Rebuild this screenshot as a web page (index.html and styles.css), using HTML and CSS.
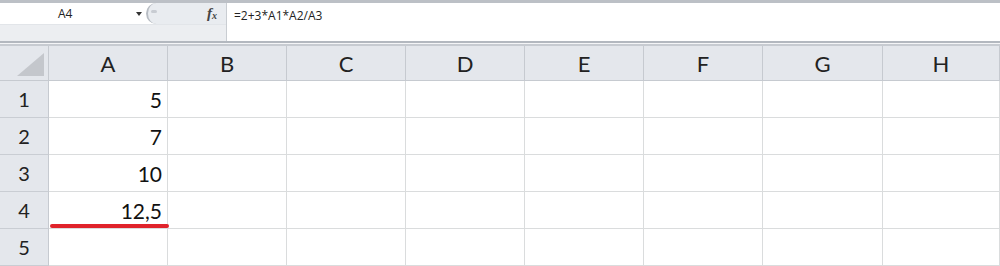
FILE: index.html
```html
<!DOCTYPE html>
<html lang="pt-br">
<head>
    <meta charset="UTF-8">
    <title>Planilha</title>
    <link rel="stylesheet" href="styles.css">
</head>
<body>
    <div class="formula-bar">
        <div class="left-part">
            <div class="top-row">
                <div class="name-box">
                    <span class="cell-ref">A4</span>
                    <span class="arrow"></span>
                </div>
                <div class="fx-area">
                    <span class="knob"></span>
                    <span class="fx"><i>f</i><sub>x</sub></span>
                </div>
            </div>
            <div class="bottom-row"></div>
        </div>
        <div class="formula">=2+3*A1*A2/A3</div>
    </div>
    <div class="separator"></div>

    <div class="sheet">
        <div class="grid">
            <div class="corner"><span class="tri"></span></div>
            <div class="col-head">A</div>
            <div class="col-head">B</div>
            <div class="col-head">C</div>
            <div class="col-head">D</div>
            <div class="col-head">E</div>
            <div class="col-head">F</div>
            <div class="col-head">G</div>
            <div class="col-head">H</div>
        </div>
        <div id="rows"></div>
        <div class="mark"></div>
    </div>

    <script>
        const valores = ['5', '7', '10', '12,5', ''];
        const rows = document.querySelector('#rows');
        valores.forEach((v, i) => {
            const linha = document.createElement('div');
            linha.className = 'grid';
            let html = `<div class="row-head">${i + 1}</div><div class="cell num">${v}</div>`;
            for (let c = 0; c < 7; c++) {
                html += '<div class="cell"></div>';
            }
            linha.innerHTML = html;
            rows.appendChild(linha);
        });
    </script>
</body>
</html>
```

FILE: styles.css
```css
body {
    margin: 0;
    padding: 0;
    width: 1000px;
    height: 266px;
    overflow: hidden;
    background: #fff;
    font-family: Lato, "Open Sans", sans-serif;
}
.formula-bar {
    display: flex;
    height: 38px;
    border-top: 3px solid #bcc0c6;
    background: #fff;
}
.left-part {
    width: 226px;
    display: flex;
    flex-direction: column;
    border-right: 1px solid #c9cdd2;
}
.top-row {
    display: flex;
    height: 21px;
}
.name-box {
    width: 146px;
    background: #fff;
    position: relative;
    font-family: "Open Sans", sans-serif;
    font-size: 12px;
    color: #222;
}
.cell-ref {
    position: absolute;
    left: 58px;
    top: 2px;
}
.arrow {
    position: absolute;
    left: 136px;
    top: 9px;
    border-left: 3px solid transparent;
    border-right: 3px solid transparent;
    border-top: 4px solid #333;
}
.fx-area {
    flex: 1;
    display: flex;
    align-items: center;
    justify-content: flex-end;
    padding-right: 9px;
    background: #e9ecf0;
    border-radius: 11px 0 0 11px;
    border-left: 2px solid #b7bcc3;
    position: relative;
}
.knob {
    position: absolute;
    left: 3px;
    top: 7px;
    width: 6px;
    height: 3px;
    border-radius: 2px;
    background: #c8ccd2;
}
.fx {
    font-family: "Liberation Serif", serif;
    font-size: 15px;
    font-weight: bold;
    color: #444;
}
.fx sub {
    font-size: 10px;
    font-style: italic;
    vertical-align: -1px;
}
.bottom-row {
    flex: 1;
    background: #eceef1;
    border-top: 1px solid #e2e5e9;
}
.formula {
    flex: 1;
    padding: 4px 0 0 7px;
    font-family: "Open Sans", sans-serif;
    font-size: 12px;
    color: #222;
}
.separator {
    height: 1px;
    border-top: 2px solid #b3b8bf;
    border-bottom: 2px solid #c7cbd1;
    background: #f4f5f7;
}
.sheet {
    position: relative;
}
.grid {
    display: grid;
    grid-template-columns: 49px repeat(6, 119px) 120px 117px;
}
.corner,
.col-head {
    height: 35px;
    box-sizing: border-box;
    background: #e4e7ec;
    border-right: 1px solid #c6cad0;
    border-bottom: 1px solid #c6cad0;
}
.corner {
    position: relative;
}
.tri {
    position: absolute;
    right: 4px;
    bottom: 4px;
    width: 0;
    height: 0;
    border-left: 27px solid transparent;
    border-bottom: 23px solid #c4c7cc;
}
.col-head {
    display: flex;
    align-items: center;
    justify-content: center;
    font-size: 22px;
    color: #222;
}
.row-head {
    height: 37px;
    box-sizing: border-box;
    background: #e4e7ec;
    border-right: 1px solid #c6cad0;
    border-bottom: 1px solid #c9cdd3;
    display: flex;
    align-items: center;
    justify-content: center;
    font-size: 20px;
    color: #222;
}
.cell {
    height: 37px;
    box-sizing: border-box;
    border-right: 1px solid #dadcdd;
    border-bottom: 1px solid #dadcdd;
}
.num {
    display: flex;
    align-items: center;
    justify-content: flex-end;
    padding-right: 5px;
    font-size: 21px;
    color: #111;
}
.mark {
    position: absolute;
    left: 50px;
    top: 178px;
    width: 119px;
    height: 4px;
    border-radius: 2px;
    background: #e0232b;
}
```
